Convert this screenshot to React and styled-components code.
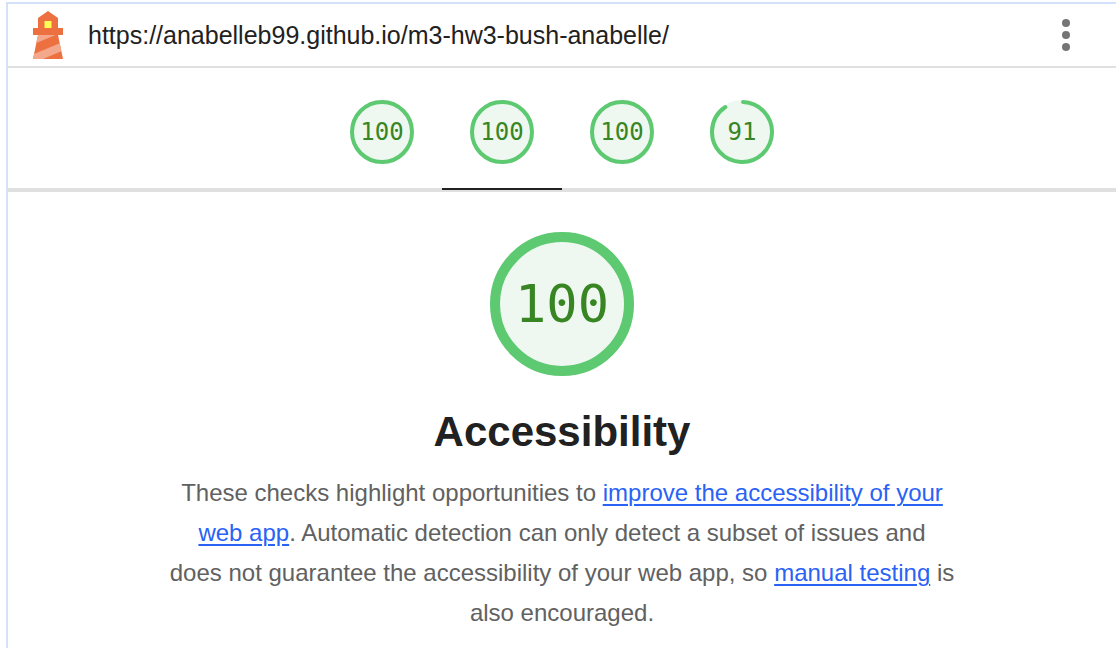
import React from "react";
import styled, { createGlobalStyle } from "styled-components";

const GlobalStyle = createGlobalStyle`
  * { box-sizing: border-box; }
  body {
    margin: 0;
    background: #fff;
    color: #212121;
    font-family: "Liberation Sans", Arial, sans-serif;
    font-size: 24px;
  }
`;

const Report = styled.div`
  margin: 2px 0 0 6px;
  min-height: calc(100vh - 2px);
  border-top: 2px solid #d3e1fb;
  border-left: 2px solid #d3e1fb;
`;

const Topbar = styled.header`
  display: flex;
  align-items: center;
  gap: 16px;
  height: 64px;
  padding: 0 24px 0 16px;
  border-bottom: 2px solid #e0e0e0;
`;

const Url = styled.a`
  flex: 1;
  font-size: 25px;
  line-height: 32px;
  color: #212121;
  text-decoration: none;
`;

const MenuButton = styled.button`
  display: flex;
  padding: 0;
  border: 0;
  background: none;
  cursor: pointer;
`;

const Scores = styled.nav`
  display: flex;
  justify-content: center;
  height: 124px;
  background: linear-gradient(#e0e0e0, #e0e0e0) bottom / 100% 4px no-repeat;
`;

const ScoreTab = styled.a`
  display: flex;
  justify-content: center;
  width: 120px;
  height: 122px;
  padding-top: 32px;
  border-bottom: 2px solid ${(p) => (p.$active ? "#212121" : "transparent")};
  text-decoration: none;
`;

const GaugeFrame = styled.div`
  display: grid;
  place-items: center;
  width: ${(p) => p.$size}px;
  height: ${(p) => p.$size}px;

  > * { grid-area: 1 / 1; }
`;

const GaugeValue = styled.span`
  color: #388523;
  font-family: "DejaVu Sans Mono", monospace;
  font-size: ${(p) => (p.$large ? 52 : 24)}px;
  line-height: 1;
`;

const Category = styled.main`
  display: flex;
  flex-direction: column;
  align-items: center;
  padding: 40px 24px 16px;
`;

const Title = styled.h1`
  margin: 28px 0 14px;
  font-size: 42px;
  line-height: 55px;
`;

const Description = styled.p`
  max-width: 800px;
  margin: 0;
  color: #616161;
  line-height: 40px;
  text-align: center;
`;

const Link = styled.a`
  color: #2962f5;
  text-decoration: underline;
  text-decoration-thickness: 2px;
  text-underline-offset: 3px;
`;

function Gauge({ score, large }) {
  const size = large ? 144 : 64;
  const stroke = large ? 10 : 4;
  const c = size / 2;
  const r = c - stroke / 2;
  const full = 2 * Math.PI * r;
  const arc = score === 100 ? full : (score / 100) * full - stroke / 2;
  return (
    <GaugeFrame $size={size}>
      <svg width={size} height={size} aria-hidden="true">
        <circle cx={c} cy={c} r={c} fill="#eef8f1" />
        <circle
          cx={c}
          cy={c}
          r={r}
          fill="none"
          stroke="#5dc971"
          strokeWidth={stroke}
          strokeLinecap="round"
          strokeDasharray={`${arc} ${full}`}
          transform={`rotate(${score === 100 ? -90 : -88} ${c} ${c})`}
        />
      </svg>
      <GaugeValue $large={large}>{score}</GaugeValue>
    </GaugeFrame>
  );
}

const LighthouseLogo = () => (
  <svg width="48" height="48" viewBox="0 0 48 48" aria-hidden="true">
    <path d="m14 7 10-7 10 7v10h5v7h-5l5 24H9l5-24H9v-7h5V7Z" fill="#ed7041" />
    <path
      d="M31.561 24H14l-1.689 8.105L31.561 24ZM18.983 48H9l1.022-4.907L35.723 32.27l1.663 7.98L18.983 48Z"
      fill="#f3a78b"
    />
    <path d="M20.5 10h7v7h-7z" fill="#fffd54" />
  </svg>
);

const categories = [
  { name: "Performance", score: 100 },
  { name: "Accessibility", score: 100 },
  { name: "Best Practices", score: 100 },
  { name: "SEO", score: 91 },
];

export default function App() {
  return (
    <>
      <GlobalStyle />
      <Report>
        <Topbar>
          <LighthouseLogo />
          <Url href="https://anabelleb99.github.io/m3-hw3-bush-anabelle/">
            https://anabelleb99.github.io/m3-hw3-bush-anabelle/
          </Url>
          <MenuButton aria-label="Tools menu">
            <svg width="52" height="48" viewBox="0 0 52 48" fill="#757575" aria-hidden="true">
              <circle cx="26" cy="12" r="4" />
              <circle cx="26" cy="24" r="4" />
              <circle cx="26" cy="36" r="4" />
            </svg>
          </MenuButton>
        </Topbar>
        <Scores aria-label="Category scores">
          {categories.map(({ name, score }) => (
            <ScoreTab
              key={name}
              href={`#${name}`}
              aria-label={`${name}: ${score}`}
              $active={name === "Accessibility"}
            >
              <Gauge score={score} />
            </ScoreTab>
          ))}
        </Scores>
        <Category>
          <Gauge score={100} large />
          <Title>Accessibility</Title>
          <Description>
            These checks highlight opportunities to{" "}
            <Link href="#improve">improve the accessibility of your web app</Link>. Automatic
            detection can only detect a subset of issues and
            <br />
            does not guarantee the accessibility of your web app, so{" "}
            <Link href="#manual">manual testing</Link> is
            <br />
            also encouraged.
          </Description>
        </Category>
      </Report>
    </>
  );
}
